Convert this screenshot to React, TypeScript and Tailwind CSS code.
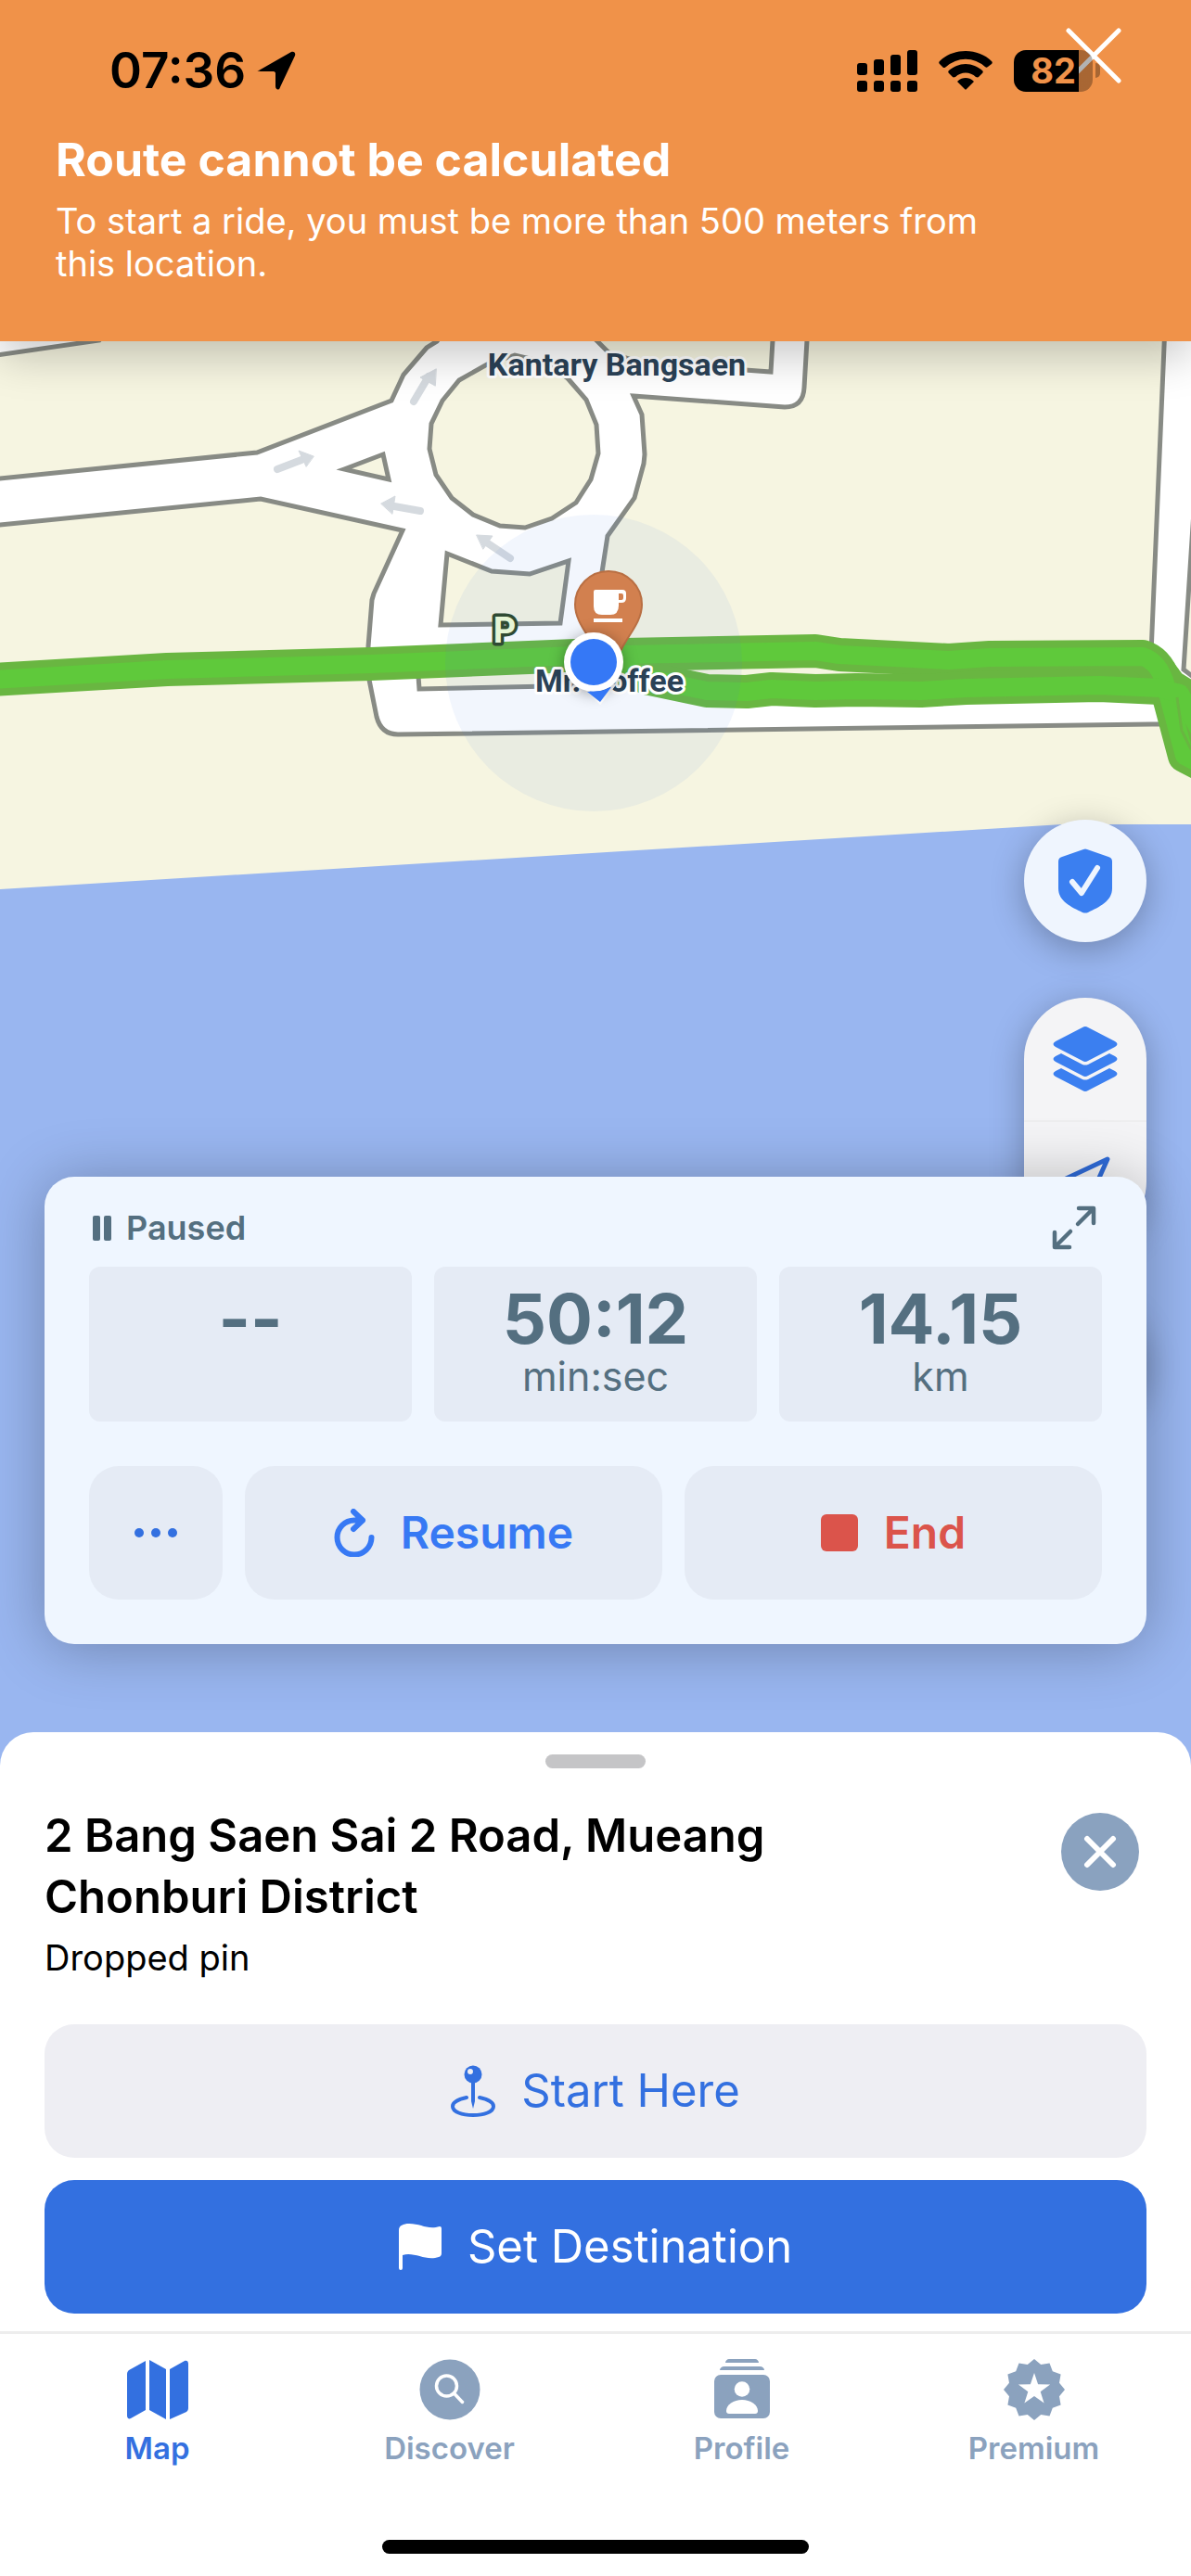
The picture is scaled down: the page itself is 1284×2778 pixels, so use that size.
import React from 'react';

interface TabItem {
  label: string;
  active?: boolean;
  icon: React.ReactNode;
}

interface Metric {
  value: string;
  unit: string;
}

const metrics: Metric[] = [
  { value: '--', unit: '' },
  { value: '50:12', unit: 'min:sec' },
  { value: '14.15', unit: 'km' },
];

// Points of a regular star, alternating between two radii
const starPoints = (count: number, cx: number, cy: number, outer: number, inner: number) =>
  Array.from({ length: count * 2 }, (_, i) => {
    const r = i % 2 === 0 ? outer : inner;
    const a = (Math.PI * i) / count - Math.PI / 2;
    return `${(cx + r * Math.cos(a)).toFixed(1)},${(cy + r * Math.sin(a)).toFixed(1)}`;
  }).join(' ');

const tabs: TabItem[] = [
  {
    label: 'Map',
    active: true,
    icon: (
      <svg viewBox="0 0 66 66" className="size-[66px]" fill="currentColor">
        <path d="M0 16c0-2 1-3 2-4L20 2v53L4 64c-2 1-4 0-4-3zM24 1l18 10v54L24 55zM46 11 62 2c2-1 4 0 4 3v48c0 2-1 3-2 4L46 65z" />
      </svg>
    ),
  },
  {
    label: 'Discover',
    icon: (
      <svg viewBox="0 0 66 66" className="size-[66px]">
        <circle cx="33" cy="33" r="32.5" fill="currentColor" />
        <g fill="none" stroke="#fff" strokeWidth="3.5" strokeLinecap="round">
          <circle cx="29.500" cy="29" r="11" />
          <path d="m37.500 37 9 9.500" />
        </g>
      </svg>
    ),
  },
  {
    label: 'Profile',
    icon: (
      <svg viewBox="0 0 66 66" className="size-[66px]">
        <path
          d="M19 0h28c2 0 4 2 4 4H15c0-2 2-4 4-4zM14 8h38c3 0 5 2 5 4H9c0-2 2-4 5-4zM10 17h46a7 7 0 0 1 7 7v33a7 7 0 0 1-7 7H10a7 7 0 0 1-7-7V24a7 7 0 0 1 7-7z"
          fill="currentColor"
        />
        <circle cx="33" cy="32.500" r="8.300" fill="#fff" />
        <path d="M16 56c0-7 8-12 17-12s17 5 17 12c0 2-1 3-3 3H19c-2 0-3-1-3-3z" fill="#fff" />
      </svg>
    ),
  },
  {
    label: 'Premium',
    icon: (
      <svg viewBox="0 0 66 66" className="size-[66px]">
        <polygon points={starPoints(12, 33, 33, 33, 28)} fill="currentColor" />
        <polygon points={starPoints(5, 33, 33, 18, 7)} fill="#fff" />
      </svg>
    ),
  },
];

const StatusBar: React.FC = () => (
  <div className="pointer-events-none relative z-10 flex h-[52px] items-center justify-between pr-[98px] pl-[118px]">
    <div className="flex items-center gap-3">
      <span className="text-[53px] leading-[56px] font-semibold text-black">07:36</span>
      <svg viewBox="0 0 42 42" className="size-[42px]">
        <path d="M2 21 37 1c3-1 5 1 4 4L25 39c-1 4-5 3-5-1V24c0-1-1-2-2-2H4c-4 0-4-1-2-1z" fill="#000" />
      </svg>
    </div>
    <div className="flex items-center gap-[23px]">
      <svg viewBox="0 0 65 45" className="h-[45px] w-[65px]">
        <rect x="0" y="14" width="11" height="13" rx="3" />
        <rect x="18" y="10" width="11" height="17" rx="3" />
        <rect x="36" y="5" width="11" height="22" rx="3" />
        <rect x="54" y="0" width="11" height="27" rx="3" />
        <rect x="0" y="33" width="11" height="12" rx="3" />
        <rect x="18" y="33" width="11" height="12" rx="3" />
        <rect x="36" y="33" width="11" height="12" rx="3" />
        <rect x="54" y="33" width="11" height="12" rx="3" />
      </svg>
      <svg viewBox="0 0 58 42" className="h-[42px] w-[58px]">
        <path d="M29 0C18 0 8 4 1 11c-1 1-1 2 0 3l4 4c1 0 2 0 3-1a31 31 0 0 1 42 0c1 1 2 1 3 0l4-3c1-1 1-2 0-3C50 4 40 0 29 0z" />
        <path d="M29 14c-7 0-13 3-18 7-1 1-1 2 0 3l4 4c1 1 2 0 3 0 6-6 16-6 22 0 1 0 2 1 3 0l4-4c1-1 1-2 0-3-5-4-11-7-18-7z" />
        <path d="M29 29c-3 0-6 1-8 3-1 1-1 1 0 2l7 7c1 1 1 1 2 0l7-7c1-1 1-1 0-2-2-2-5-3-8-3z" />
      </svg>
      <div className="flex items-center gap-[3px]">
        <div className="flex h-[45px] w-[85px] items-center justify-center overflow-hidden rounded-[13px] bg-linear-to-r from-black from-82% to-black/30 to-82%">
          <span className="text-[38px] leading-[45px] font-bold text-[#f09249]">82</span>
        </div>
        <div className="h-4 w-[5px] rounded-r-full bg-black/30" />
      </div>
    </div>
  </div>
);

const Banner: React.FC = () => (
  <header className="relative z-10 bg-[#f09249] pt-[50px] pb-[61px] text-white shadow-[0_16px_44px_rgba(0,0,0,0.22)]">
    <button type="button" aria-label="Dismiss" className="absolute top-7 right-[73px] size-16 p-[2px]">
      <svg viewBox="0 0 60 60" className="size-[60px]">
        <path d="m3 3 54 54M57 3 3 57" stroke="#fff" strokeWidth="5" strokeLinecap="round" />
      </svg>
    </button>
    <StatusBar />
    <div className="px-[60px] pt-10">
      <h1 className="text-[50px] leading-[60px] font-bold">Route cannot be calculated</h1>
      <p className="mt-[13px] max-w-[1060px] text-[38px] leading-[46px]">
        To start a ride, you must be more than 500 meters from this location.
      </p>
    </div>
  </header>
);

const MapCanvas: React.FC = () => (
  <svg
    viewBox="0 368 1284 1536"
    preserveAspectRatio="xMidYMin slice"
    className="absolute inset-0 h-full w-full"
    role="img"
    aria-label="Map"
  >
    <rect x="0" y="368" width="1284" height="1536" fill="#fff" />

    {/* Land blocks, the white gaps between them are the roads */}
    <g fill="#f6f5e1" stroke="#888b85" strokeWidth="5">
      <path d="M-10 384 107 367 120 350H485L471 368 460 375 435 404 422 432 277 488-10 517z" />
      <path d="M-10 567 281 538 434 572 403 640 401 647 397 697 398 733 406 773Q411 792 429 792L1242 781 1300 781V1000H-10z" />
      <path d="M555 383 525 393 495 410 477 432 465 457 463 484 470 512 487 537 510 555 539 567 566 569 595 559 621 542 637 517 645 489 643 458 632 431 612 408 585 390z" />
      <path d="M371 506 413 490 419 517z" />
      <path d="M482 597 530 616 571 619 613 605 604 672 475 674z" />
      <path d="M449 700 452 743 640 739 641 700z" />
      <path d="M625 350 644 368 656 380 690 391 831 401 834 350z" />
      <path d="M683 427 846 439Q866 439 867 418L871 350H1256L1240 728 640 738 649 617 655 578 684 537 694 500 695 490 692 447z" />
      <path d="M1300 350 1276 722 1300 740z" />
    </g>

    {/* Sea */}
    <path d="M0 959 1145 889H1284V1904H0z" fill="#99b6f0" />

    {/* One-way arrows */}
    <g fill="#d5dadf" stroke="#d5dadf" strokeLinecap="round">
      <path d="m446 433 16-27" strokeWidth="8" />
      <path d="m470 398-17 9 16 9z" strokeWidth="1" />
      <path d="m299 506 26-10" strokeWidth="8" />
      <path d="m338 492-16-6 8 17z" strokeWidth="1" />
      <path d="m453 551-28-5" strokeWidth="8" />
      <path d="m411 543 15-8-3 19z" strokeWidth="1" />
      <path d="m550 602-24-16" strokeWidth="8" />
      <path d="m514 577 17 1-10 14z" strokeWidth="1" />
    </g>

    {/* Recorded track */}
    <g fill="none" strokeLinejoin="round">
      <g stroke="#69b641" strokeWidth="36">
        <path d="M-10 733 180 722 400 716 620 707 879 702 905 706 1023 712 1067 709 1232 708Q1250 714 1257 740L1277 815 1300 827" />
        <path d="M640 708 700 732 762 745 805 746 832 743 879 745 923 744 993 745 1041 742 1185 739 1250 742 1265 748 1300 810" />
        <path d="M1232 708 1250 724 1262 740 1300 764V820" />
      </g>
      <g stroke="#5fc93b" strokeWidth="20">
        <path d="M-10 733 180 722 400 716 620 707 879 702 905 706 1023 712 1067 709 1232 708Q1250 714 1257 740L1277 815 1300 827" />
        <path d="M640 708 700 732 762 745 805 746 832 743 879 745 923 744 993 745 1041 742 1185 739 1250 742 1272 748 1300 800" />
      </g>
      <path d="M1269 752 1274 788 1284 808" stroke="#69b641" strokeWidth="3" />
    </g>

    <circle cx="640" cy="715" r="160" fill="#4682e8" fillOpacity="0.07" />

    {/* Places */}
    <g fontFamily="Roboto, sans-serif" fontWeight="700" fontSize="34" textAnchor="middle" paintOrder="stroke" strokeLinejoin="round">
      <text x="665" y="405" fill="#2b4257" stroke="#fff" strokeWidth="6">Kantary Bangsaen</text>
      <text x="657" y="746" fill="#2b4257" stroke="#fff" strokeWidth="6">Mr. Coffee</text>
      <text x="544" y="693" fontSize="38" fill="#e6f5d5" stroke="#2f4a33" strokeWidth="7">P</text>
    </g>
    <path
      d="M656 616a36 36 0 0 1 36 36c0 18-14 32-22 48-4 8-7 14-14 20-7-6-10-12-14-20-8-16-22-30-22-48a36 36 0 0 1 36-36z"
      fill="#d2804f"
      stroke="#b96f43"
      strokeWidth="2"
    />
    <path d="M642 636h29q4 0 4 4v5q0 5-5 5h-3v3q0 10-9 10h-9q-9 0-9-9v-16q0-2 2-2zm25 4v7h3q2 0 2-2v-3q0-2-2-2z" fill="#fff" fillRule="evenodd" />
    <rect x="640" y="667" width="31" height="4" fill="#fff" />

    {/* Current position */}
    <path d="m629 741 18 17 15-19z" fill="#3578f6" stroke="#fff" strokeWidth="3" />
    <circle cx="640" cy="714" r="32" fill="#fff" className="drop-shadow-[0_2px_8px_rgba(0,0,0,0.35)]" />
    <circle cx="640" cy="714" r="25" fill="#3578f6" />
    <path d="m633 746 14 11 12-16-10 4z" fill="#3578f6" />
  </svg>
);

const MapControls: React.FC = () => (
  <div className="absolute top-[516px] right-12 flex w-[132px] flex-col gap-[60px] text-[#3b7ff0]">
    <button
      type="button"
      aria-label="Safety"
      className="flex h-[132px] items-center justify-center rounded-full bg-[#eff5fe] shadow-[0_8px_36px_rgba(0,0,0,0.28)]"
    >
      <svg viewBox="0 0 58 70" className="h-[70px] w-[58px]">
        <path d="M27 1q2-1 4 0l23 8q4 1 4 5v29c0 14-14 20-26 26q-3 1-6 0C14 63 0 57 0 43V14q0-4 4-5z" fill="currentColor" />
        <path d="m15 36 10 12 17-27" fill="none" stroke="#eff5fe" strokeWidth="6" strokeLinecap="round" strokeLinejoin="round" />
      </svg>
    </button>
    <div className="flex flex-col rounded-[66px] bg-[#f4f4f6] shadow-[0_8px_36px_rgba(0,0,0,0.28)]">
      <button type="button" aria-label="Map layers" className="flex h-[132px] items-center justify-center">
        <svg viewBox="0 0 70 70" className="size-[70px]" fill="currentColor">
          <path d="M32 1q3-2 6 0l29 15q5 3 0 6L38 37q-3 2-6 0L3 22q-5-3 0-6z" />
          <path d="m9 29 23 12q3 1 6 0l23-12 6 3q5 3 0 6L38 53q-3 2-6 0L3 38q-5-3 0-6z" />
          <path d="m9 45 23 12q3 1 6 0l23-12 6 3q5 3 0 6L38 69q-3 2-6 0L3 54q-5-3 0-6z" />
        </svg>
      </button>
      <button type="button" aria-label="Locate me" className="flex h-[132px] items-center justify-center border-t-2 border-[#eeeeef]">
        <svg viewBox="0 0 56 56" className="size-14">
          <path d="M3 26 52 3 30 52l-4-22z" fill="none" stroke="#2f6bd8" strokeWidth="5" strokeLinejoin="round" />
        </svg>
      </button>
    </div>
    <button type="button" aria-label="Add" className="h-[132px] rounded-full bg-[#eff5fe] shadow-[0_8px_36px_rgba(0,0,0,0.28)]" />
  </div>
);

const RideCard: React.FC = () => (
  <section className="relative mx-12 mb-[131px] rounded-[32px] bg-[#eff6ff] px-12 pt-8 pb-12 text-[#546f80] shadow-[0_4px_64px_rgba(0,0,0,0.28)]">
    <div className="flex h-[46px] items-center justify-between pr-[6px] pl-1">
      <div className="flex items-center gap-4">
        <svg viewBox="0 0 20 27" className="h-[27px] w-5" fill="currentColor">
          <rect width="8" height="27" rx="2" />
          <rect x="12" width="8" height="27" rx="2" />
        </svg>
        <span className="text-[36px] leading-[46px] font-semibold">Paused</span>
      </div>
      <button type="button" aria-label="Expand" className="size-12">
        <svg viewBox="0 0 48 48" className="size-12" fill="none" stroke="currentColor" strokeWidth="4.5" strokeLinecap="round" strokeLinejoin="round">
          <path d="M29 3h16v16M44 4 28 20M3 29v16h16M4 44l16-16" />
        </svg>
      </button>
    </div>

    <div className="mt-[19px] grid grid-cols-3 gap-6">
      {metrics.map((m) => (
        <div key={m.value} className="flex h-[167px] flex-col items-center rounded-[12px] bg-[#e5ebf5] pt-5">
          <span className="text-[74px] leading-[72px] font-bold">{m.value}</span>
          <span className="text-[43px] leading-[52px]">{m.unit}</span>
        </div>
      ))}
    </div>

    <div className="mt-12 flex gap-6 text-[48px] font-semibold">
      <button type="button" aria-label="More" className="flex size-36 items-center justify-center rounded-[32px] bg-[#e5ebf5] text-[#3370e0]">
        <svg viewBox="0 0 48 12" className="h-3 w-12" fill="currentColor">
          <circle cx="6" cy="6" r="5" />
          <circle cx="24" cy="6" r="5" />
          <circle cx="42" cy="6" r="5" />
        </svg>
      </button>
      <button type="button" className="flex h-36 flex-1 items-center justify-center gap-7 rounded-[32px] bg-[#e5ebf5] text-[#3779f4]">
        <svg viewBox="0 0 44 52" className="h-[52px] w-11" fill="none" stroke="currentColor" strokeWidth="6" strokeLinecap="round" strokeLinejoin="round">
          <path d="M31 12.500H22A18.500 18.500 0 1 0 40.500 31M21 3l10 9.500L21 22" />
        </svg>
        Resume
      </button>
      <button type="button" className="flex h-36 flex-1 items-center justify-center gap-7 rounded-[32px] bg-[#e5ebf5] text-[#db544b]">
        <span className="size-10 rounded-[6px] bg-[#db544b]" />
        End
      </button>
    </div>
  </section>
);

const PlaceSheet: React.FC = () => (
  <section className="relative -mt-9 rounded-t-[36px] bg-white px-12 pt-6 pb-[19px]">
    <div className="mx-auto h-[15px] w-[108px] rounded-full bg-[#c5c5c7]" />
    <div className="mt-10 flex items-start justify-between">
      <div className="w-[860px]">
        <h2 className="text-[49px] leading-[66px] font-semibold text-black">
          2 Bang Saen Sai 2 Road, Mueang Chonburi District
        </h2>
        <p className="mt-2 text-[38px] leading-[48px] text-black">Dropped pin</p>
      </div>
      <button type="button" aria-label="Close" className="mt-2 mr-2 flex size-[84px] items-center justify-center rounded-full bg-[#8aa2bf]">
        <svg viewBox="0 0 36 36" className="size-9">
          <path d="m4 4 28 28M32 4 4 32" stroke="#fff" strokeWidth="6" strokeLinecap="round" />
        </svg>
      </button>
    </div>
    <div className="mt-12 flex flex-col gap-6 text-[49px]">
      <button type="button" className="flex h-36 items-center justify-center gap-7 rounded-[32px] bg-[#eeeef3] text-[#3370e0]">
        <svg viewBox="0 0 48 56" className="h-14 w-12">
          <path d="M17 35C8 37 2 40 2 44.500c0 6 10 9.500 22 9.500s22-3.500 22-9.500C46 40 40 37 31 35" fill="none" stroke="currentColor" strokeWidth="4" strokeLinecap="round" />
          <path d="M22 17h4v22l-2 8-2-8z" fill="currentColor" />
          <circle cx="24" cy="10" r="9.500" fill="currentColor" />
          <circle cx="21" cy="7" r="3" fill="#eeeef3" />
        </svg>
        Start Here
      </button>
      <button type="button" className="flex h-36 items-center justify-center gap-7 rounded-[32px] bg-[#3370e0] text-white">
        <svg viewBox="0 0 46 50" className="h-[50px] w-[46px]" fill="currentColor">
          <path d="M0 7C0 2 5 0 11 0c13 0 20 7 33 3q2 0 2 2v27q0 3-3 4C29 41 17 30 4 34v14q0 2-2 2t-2-2z" />
        </svg>
        Set Destination
      </button>
    </div>
  </section>
);

const TabBar: React.FC = () => (
  <nav className="relative border-t-[3px] border-[#ededed] bg-white px-3 pt-[27px] pb-6">
    <div className="grid grid-cols-4">
      {tabs.map((tab) => (
        <a
          key={tab.label}
          href="#"
          className={`flex flex-col items-center gap-[10px] ${tab.active ? 'text-[#3370e0]' : 'text-[#8ba2be]'}`}
        >
          {tab.icon}
          <span className="text-[33px] leading-10 font-semibold">{tab.label}</span>
        </a>
      ))}
    </div>
    <div className="mx-auto mt-[79px] h-[15px] w-[460px] rounded-full bg-black" />
  </nav>
);

const App: React.FC = () => {
  return (
    <div className="flex min-h-screen flex-col bg-white font-['Inter',sans-serif]">
      <Banner />
      <main className="relative flex min-h-[1300px] flex-1 flex-col justify-end overflow-hidden">
        <MapCanvas />
        <MapControls />
        <RideCard />
      </main>
      <PlaceSheet />
      <TabBar />
    </div>
  );
};

export default App;
